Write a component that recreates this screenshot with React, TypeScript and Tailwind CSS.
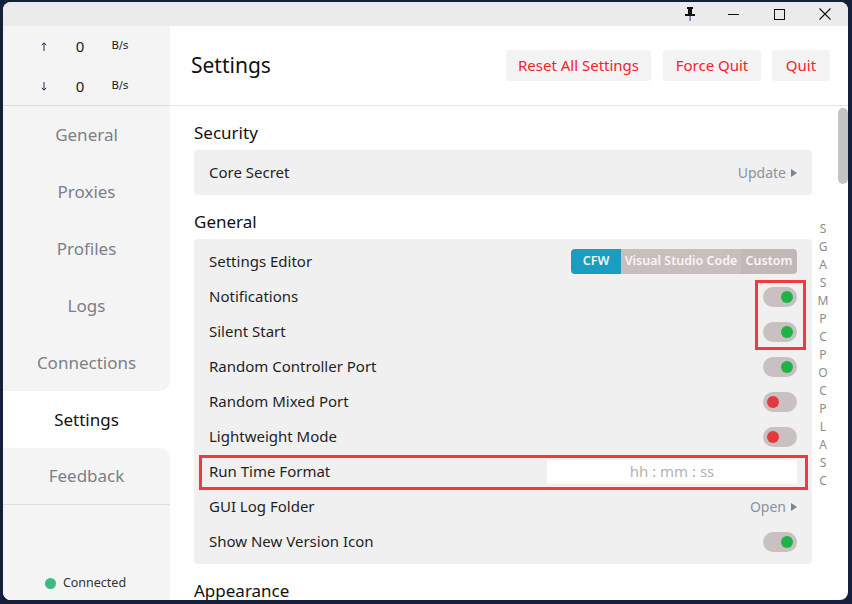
import React from "react";

const font = { fontFamily: '"Noto Sans", "Open Sans", sans-serif' };

type Row =
  | { label: string; kind: "toggle"; on: boolean }
  | { label: string; kind: "link"; text: string }
  | { label: string; kind: "editor" }
  | { label: string; kind: "input" };

const generalRows: Row[] = [
  { label: "Settings Editor", kind: "editor" },
  { label: "Notifications", kind: "toggle", on: true },
  { label: "Silent Start", kind: "toggle", on: true },
  { label: "Random Controller Port", kind: "toggle", on: true },
  { label: "Random Mixed Port", kind: "toggle", on: false },
  { label: "Lightweight Mode", kind: "toggle", on: false },
  { label: "Run Time Format", kind: "input" },
  { label: "GUI Log Folder", kind: "link", text: "Open" },
  { label: "Show New Version Icon", kind: "toggle", on: true },
];

const navItems = ["General", "Proxies", "Profiles", "Logs", "Connections"];
const indexLetters = ["S", "G", "A", "S", "M", "P", "C", "P", "O", "C", "P", "L", "A", "S", "C"];

function Toggle({ on }: { on: boolean }) {
  return (
    <div className={`flex h-[20px] w-[34px] items-center rounded-full bg-[#c9c1c1] px-[4px] ${on ? "justify-end" : "justify-start"}`}>
      <div className={`h-[12px] w-[12px] rounded-full ${on ? "bg-[#1db445]" : "bg-[#e03a40]"}`} />
    </div>
  );
}

function LinkText({ text }: { text: string }) {
  return (
    <div className="flex items-center gap-[5px] text-[14px] text-[#8a92a3]">
      <span>{text}</span>
      <svg width="6" height="8" viewBox="0 0 6 8">
        <path d="M0 0 L6 4 L0 8 Z" fill="#7d838f" />
      </svg>
    </div>
  );
}

function Editor() {
  return (
    <div className="flex h-[25px] overflow-hidden rounded-[4px] text-[12.5px] font-semibold text-[#f7f5f5]">
      <div className="flex w-[50px] items-center justify-center bg-[#1a9dc0]">CFW</div>
      <div className="flex w-[120px] items-center justify-center bg-[#c8bebe]">Visual Studio Code</div>
      <div className="flex w-[56px] items-center justify-center bg-[#c2b8b8]">Custom</div>
    </div>
  );
}

function SettingRow({ row }: { row: Row }) {
  return (
    <div className="relative flex h-[35px] items-center justify-between">
      <span className="text-[15px] text-[#1f1f1f]">{row.label}</span>
      {row.kind === "toggle" && <Toggle on={row.on} />}
      {row.kind === "link" && <LinkText text={row.text} />}
      {row.kind === "editor" && <Editor />}
      {row.kind === "input" && (
        <div className="flex h-[24px] w-[250px] items-center justify-center bg-white text-[15px] text-[#b3b3b3]">
          hh : mm : ss
        </div>
      )}
      {row.kind === "input" && (
        <div className="pointer-events-none absolute left-[-10px] right-[-11px] top-[1px] bottom-[-1px] border-[3px] border-[#f23a3a]" />
      )}
    </div>
  );
}

function Arrow({ up }: { up: boolean }) {
  return (
    <svg width="6" height="9" viewBox="0 0 6 9" className={up ? "" : "rotate-180"}>
      <path d="M3 9 V1 M0.8 3.2 L3 0.8 L5.2 3.2" stroke="#2e2450" strokeWidth="1" fill="none" />
    </svg>
  );
}

export default function App() {
  return (
    <div className="h-[604px] w-[852px] bg-[#14203c] pt-[2px] pl-[3px] pr-[4px] pb-[4px]" style={font}>
      <div className="flex h-full flex-col overflow-hidden rounded-[8px] bg-white">
        {/* title bar */}
        <div className="flex h-[24px] shrink-0 items-center justify-end bg-[#ebebeb]">
          <div className="flex h-full w-[40px] items-center justify-center">
            <svg width="10" height="14" viewBox="0 0 10 14">
              <rect x="2" y="0" width="6" height="2" fill="#111" />
              <rect x="3" y="2" width="4" height="5" fill="#111" />
              <rect x="0" y="7" width="10" height="2" fill="#111" />
              <rect x="4.5" y="9" width="1.2" height="5" fill="#5a3fb0" />
            </svg>
          </div>
          <div className="flex h-full w-[46px] items-center justify-center">
            <div className="h-[1px] w-[11px] bg-[#111]" />
          </div>
          <div className="flex h-full w-[46px] items-center justify-center">
            <div className="h-[11px] w-[11px] border border-[#111]" />
          </div>
          <div className="flex h-full w-[46px] items-center justify-center">
            <svg width="12" height="12" viewBox="0 0 12 12">
              <path d="M0.5 0.5 L11.5 11.5 M11.5 0.5 L0.5 11.5" stroke="#111" strokeWidth="1.1" />
            </svg>
          </div>
        </div>

        <div className="flex min-h-0 flex-1">
          {/* sidebar */}
          <div className="flex w-[167px] shrink-0 flex-col bg-white">
            <div className="flex h-[80px] flex-col justify-center gap-[20px] border-b border-[#dedede] bg-[#f4f4f4] pl-[27px] pt-[1px]">
              {[true, false].map((up) => (
                <div key={String(up)} className="flex h-[20px] items-center">
                  <span className="flex w-[28px] justify-center">
                    <Arrow up={up} />
                  </span>
                  <span className="ml-[8px] w-[28px] text-center text-[15px] text-[#222]">0</span>
                  <span className="ml-[10px] w-[32px] text-center text-[11px] text-[#222]" style={{ fontFamily: '"DejaVu Sans", sans-serif' }}>B/s</span>
                </div>
              ))}
            </div>
            <div className="rounded-br-[10px] bg-[#f4f4f4]">
              {navItems.map((n) => (
                <div key={n} className="flex h-[57px] items-center justify-center text-[17px] text-[#7b8089]">
                  {n}
                </div>
              ))}
            </div>
            <div className="flex h-[57px] items-center justify-center bg-white text-[17px] text-[#111]">
              Settings
            </div>
            <div className="flex flex-1 flex-col rounded-tr-[10px] bg-[#f4f4f4]">
              <div className="flex h-[57px] items-center justify-center border-b border-[#dedede] text-[17px] text-[#7b8089]">
                Feedback
              </div>
              <div className="flex flex-1 items-end justify-center pb-[7px]">
                <div className="flex items-center gap-[7px] pr-[2px]">
                  <div className="h-[11px] w-[11px] rounded-full bg-[#3dba7d]" />
                  <span className="text-[12.5px] text-[#333]">Connected</span>
                </div>
              </div>
            </div>
          </div>

          {/* main */}
          <div className="relative flex min-w-0 flex-1 flex-col">
            <div className="flex h-[80px] shrink-0 items-center justify-between border-b border-[#e2e2e2] pl-[21px] pr-[18px]">
              <h1 className="text-[21px] text-[#111]">Settings</h1>
              <div className="flex items-center">
                <button className="h-[31px] w-[145px] rounded-[3px] bg-[#f3f3f3] text-[15px] text-[#f5222d]">
                  Reset All Settings
                </button>
                <button className="ml-[12px] h-[31px] w-[98px] rounded-[3px] bg-[#f3f3f3] text-[15px] text-[#f5222d]">
                  Force Quit
                </button>
                <button className="ml-[11px] h-[31px] w-[58px] rounded-[3px] bg-[#f3f3f3] text-[15px] text-[#f5222d]">
                  Quit
                </button>
              </div>
            </div>

            <div className="flex min-h-0 flex-1">
              <div className="min-w-0 flex-1 overflow-hidden pl-[24px] pr-[26px] pt-[15px]">
                <div className="h-[24px] text-[17px] leading-[24px] text-[#111]">Security</div>
                <div className="mt-[5px] rounded-[4px] bg-[#f0f0f0] px-[15px] py-[5px]">
                  <SettingRow row={{ label: "Core Secret", kind: "link", text: "Update" }} />
                </div>

                <div className="mt-[15px] h-[24px] text-[17px] leading-[24px] text-[#111]">General</div>
                <div className="relative mt-[5px] rounded-[4px] bg-[#f0f0f0] px-[15px] py-[5px]">
                  {generalRows.map((r) => (
                    <SettingRow key={r.label} row={r} />
                  ))}
                  <div className="pointer-events-none absolute right-[6px] top-[41px] h-[70px] w-[51px] border-[3px] border-[#f23a3a]" />
                </div>

                <div className="mt-[15px] h-[24px] text-[17px] leading-[24px] text-[#111]">Appearance</div>
              </div>
              <div className="w-[10px] shrink-0 pt-[2px]">
                <div className="h-[76px] rounded-full bg-[#c4c4c4]" />
              </div>
            </div>

            <div className="absolute left-[645px] top-[194px] flex w-[16px] flex-col items-center">
              {indexLetters.map((l, i) => (
                <span key={i} className="h-[18px] text-[12px] leading-[18px] text-[#8c8c8c]">
                  {l}
                </span>
              ))}
            </div>
          </div>
        </div>
      </div>
    </div>
  );
}
